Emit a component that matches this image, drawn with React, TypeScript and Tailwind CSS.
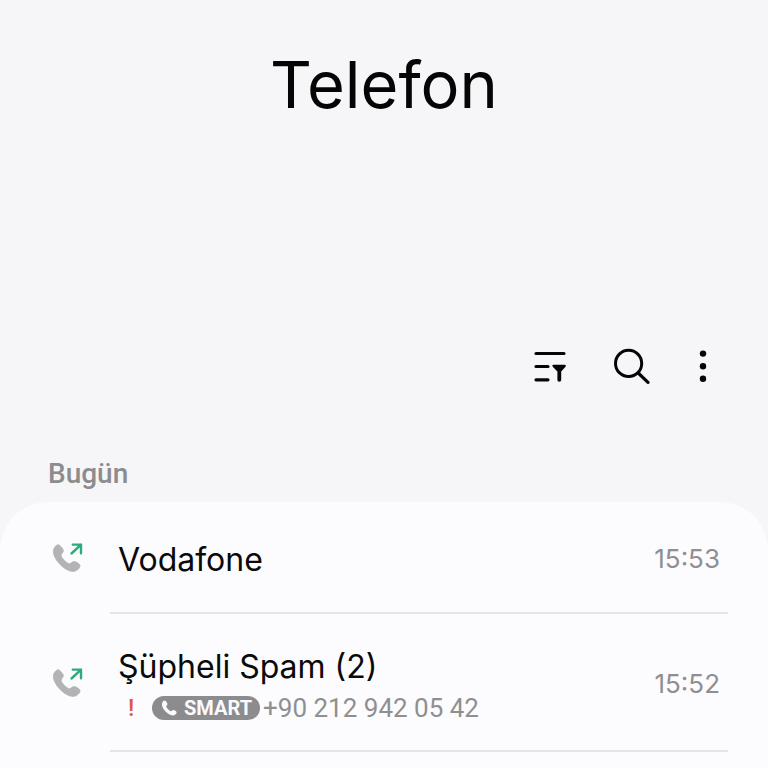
import React from "react";

type Call = {
  name: string;
  time: string;
  number?: string;
  spam?: boolean;
};

const calls: Call[] = [
  { name: "Vodafone", time: "15:53" },
  { name: "Şüpheli Spam (2)", time: "15:52", number: "+90 212 942 05 42", spam: true },
];

const handset =
  "M8.3 4.7C9.6 4.7 13.2 8.6 13.4 10.6C13.5 12.6 11.2 13.6 11.2 15.4C11.4 18 17.2 23.6 19.4 23.8C21 23.8 22.2 21.6 24 21.6C26 21.6 30 23.8 30 26C30 28.4 26.4 31.4 23 31.4C14.8 31.4 3.4 19.6 3.4 11.4C3.4 8.2 6 4.7 8.3 4.7Z";

const OutgoingIcon = () => (
  <svg className="size-9 shrink-0" viewBox="0 0 36 36" fill="none" aria-hidden="true">
    <path d={handset} fill="#b3b3b5" stroke="#b3b3b5" strokeWidth="0.8" />
    <path d="M21.5 13.5L31 4.6M22.8 4.6H31V13.2" stroke="#2eaa7b" strokeWidth="2.4" strokeLinecap="round" strokeLinejoin="round" />
  </svg>
);

const FilterIcon = () => (
  <svg className="h-9 w-9" viewBox="0 0 36 36" fill="none" aria-hidden="true">
    <path d="M4 5.5H32M4 18.5H16M4 31.8H16" stroke="#050505" strokeWidth="3.2" strokeLinecap="round" />
    <path d="M21.6 16.8H32.5Q34.8 17 33.3 19L29.2 23.4V32Q29.2 33.8 27.3 33.8Q25.4 33.8 25.4 32V23.4L21 19Q19.4 17 21.6 16.8Z" fill="#050505" />
  </svg>
);

const SearchIcon = () => (
  <svg className="h-9 w-9" viewBox="0 0 36 36" fill="none" aria-hidden="true">
    <circle cx="14.6" cy="15.4" r="13.1" stroke="#050505" strokeWidth="3" />
    <path d="M24.2 25L34 34.4" stroke="#050505" strokeWidth="3.2" strokeLinecap="round" />
  </svg>
);

const MoreIcon = () => (
  <svg className="h-9 w-[14px]" viewBox="0 0 14 36" fill="#050505" aria-hidden="true">
    <circle cx="7" cy="5.6" r="3.2" />
    <circle cx="7" cy="18.2" r="3.2" />
    <circle cx="7" cy="30.8" r="3.2" />
  </svg>
);

const CallRow = ({ call }: { call: Call }) => (
  <li className="pl-[50px] pr-10">
    <div className="flex items-center">
      <OutgoingIcon />
      <div className={`ml-6 flex flex-1 items-center justify-between border-b-2 border-[#e4e4e6] px-2 pt-[3px] ${call.spam ? "h-[138px]" : "h-[112px]"}`}>
        <div className={call.spam ? "pt-1.5" : "pt-[2px]"}>
          <div className="text-[32px] leading-[42px] text-[#0a0a0a]">{call.name}</div>
          {call.number && (
            <div className="flex items-center font-[Roboto] text-[#8f8f91]">
              <span className="w-[34px] pl-[10px] text-[24px] font-medium leading-10 text-[#dc5848]">!</span>
              <span className="mr-[3px] flex h-6 items-center gap-1 rounded-full bg-[#8c8c8f] px-2 text-[20px] font-bold text-[#fafafc]">
                <svg className="size-5" viewBox="0 0 36 36" aria-hidden="true">
                  <path d={handset} fill="#fafafc" />
                </svg>
                SMART
              </span>
              <span className="text-[26px] leading-10">{call.number}</span>
            </div>
          )}
        </div>
        <time className="text-[26px] text-[#8f8f91]">{call.time}</time>
      </div>
    </div>
  </li>
);

export default function App() {
  return (
    <main className="flex min-h-screen flex-col bg-[#f6f6f8] font-[Inter,sans-serif]">
      <header>
        <h1 className="pt-10 text-center text-[65px] leading-[90px] text-[#050505]">Telefon</h1>
        <div className="mt-[218px] flex justify-end gap-[46px] pr-[58px]">
          <button type="button" aria-label="Filtrele"><FilterIcon /></button>
          <button type="button" aria-label="Ara"><SearchIcon /></button>
          <button type="button" aria-label="Diğer seçenekler"><MoreIcon /></button>
        </div>
      </header>
      <h2 className="mt-[72px] pl-12 font-[Roboto] text-[28px] font-medium leading-9 text-[#8c8c8e]">Bugün</h2>
      <ul className="mt-[10px] flex-1 rounded-t-[48px] bg-[#fcfcfe]">
        {calls.map((call) => (
          <CallRow key={call.name} call={call} />
        ))}
      </ul>
    </main>
  );
}
